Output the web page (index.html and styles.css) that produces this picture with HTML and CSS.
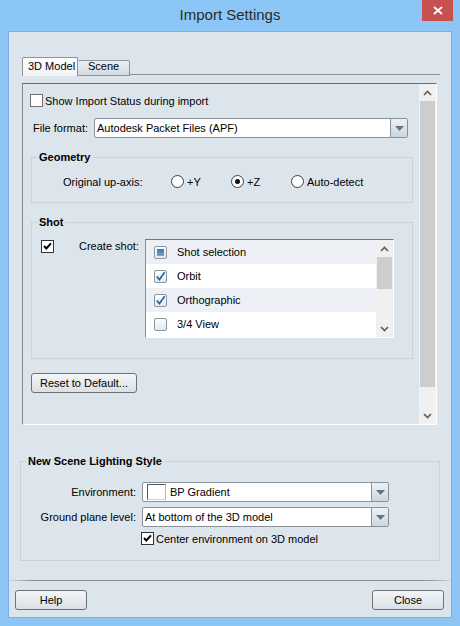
FILE: index.html
```html
<!DOCTYPE html>
<html>
<head>
<meta charset="utf-8">
<title>Import Settings</title>
<link rel="stylesheet" href="styles.css">
</head>
<body>
<div class="window">
  <div class="titlebar">
    <div class="title">Import Settings</div>
    <div class="close-btn"><svg width="10" height="9" viewBox="0 0 10 9"><path d="M1 1 L9 8 M9 1 L1 8" stroke="#fff" stroke-width="1.8" fill="none"/></svg></div>
  </div>
  <div class="client">
    <div class="tabs">
      <div class="tab active">3D Model</div>
      <div class="tab scene">Scene</div>
      <div class="tabline"></div>
    </div>
    <div class="panel">
      <div class="panel-body">
        <div class="check-row show-status"><span class="cb"></span><span>Show Import Status during import</span></div>
        <div class="field-row file-format">
          <span class="ff-label">File format:</span>
          <div class="combo ff-combo">
            <span class="combo-text">Autodesk Packet Files (APF)</span>
            <span class="combo-btn"><svg width="9" height="5" viewBox="0 0 9 5"><polygon points="0,0 9,0 4.5,5" fill="#667482"/></svg></span>
          </div>
        </div>
        <div class="group geometry">
          <div class="group-title">Geometry</div>
          <div class="radio-row">
            <span class="axis-label">Original up-axis:</span>
            <span class="opt"><span class="radio"></span><span>+Y</span></span>
            <span class="opt"><span class="radio on"></span><span>+Z</span></span>
            <span class="opt last"><span class="radio"></span><span>Auto-detect</span></span>
          </div>
        </div>
        <div class="group shot">
          <div class="group-title">Shot</div>
          <div class="shot-row">
            <span class="cb checked shot-cb"><svg width="11" height="11" viewBox="0 0 11 11"><path d="M2 5 L4.3 7.5 L9 2.3" stroke="#000" stroke-width="2" fill="none"/></svg></span>
            <span class="shot-label">Create shot:</span>
            <div class="listbox">
              <div class="list-rows">
                <div class="list-row alt"><span class="lcb"><span class="mixed-fill"></span></span><span>Shot selection</span></div>
                <div class="list-row"><span class="lcb"><svg width="11" height="11" viewBox="0 0 11 11"><path d="M1.8 5.6 L4.4 8.6 L9.6 1.2" stroke="#1f5f94" stroke-width="1.6" fill="none"/></svg></span><span>Orbit</span></div>
                <div class="list-row alt"><span class="lcb"><svg width="11" height="11" viewBox="0 0 11 11"><path d="M1.8 5.6 L4.4 8.6 L9.6 1.2" stroke="#1f5f94" stroke-width="1.6" fill="none"/></svg></span><span>Orthographic</span></div>
                <div class="list-row"><span class="lcb"></span><span>3/4 View</span></div>
              </div>
              <div class="vscroll small">
                <div class="arrow"><svg width="9" height="6" viewBox="0 0 9 6"><path d="M1 5 L4.5 1.5 L8 5" stroke="#5f5f5f" stroke-width="1.7" fill="none"/></svg></div>
                <div class="thumb small-thumb"></div>
                <div class="spacer"></div>
                <div class="arrow"><svg width="9" height="6" viewBox="0 0 9 6"><path d="M1 1 L4.5 4.5 L8 1" stroke="#5f5f5f" stroke-width="1.7" fill="none"/></svg></div>
              </div>
            </div>
          </div>
        </div>
        <button class="btn reset">Reset to Default...</button>
      </div>
      <div class="vscroll big">
        <div class="arrow"><svg width="9" height="6" viewBox="0 0 9 6"><path d="M1 5 L4.5 1.5 L8 5" stroke="#5f5f5f" stroke-width="1.7" fill="none"/></svg></div>
        <div class="thumb big-thumb"></div>
        <div class="spacer"></div>
        <div class="arrow"><svg width="9" height="6" viewBox="0 0 9 6"><path d="M1 1 L4.5 4.5 L8 1" stroke="#5f5f5f" stroke-width="1.7" fill="none"/></svg></div>
      </div>
    </div>
    <div class="group lighting">
      <div class="group-title">New Scene Lighting Style</div>
      <div class="form-row first">
        <span class="flabel">Environment:</span>
        <div class="combo wide">
          <span class="swatch"></span>
          <span class="combo-text env-text">BP Gradient</span>
          <span class="combo-btn"><svg width="9" height="5" viewBox="0 0 9 5"><polygon points="0,0 9,0 4.5,5" fill="#667482"/></svg></span>
        </div>
      </div>
      <div class="form-row">
        <span class="flabel">Ground plane level:</span>
        <div class="combo wide">
          <span class="combo-text">At bottom of the 3D model</span>
          <span class="combo-btn"><svg width="9" height="5" viewBox="0 0 9 5"><polygon points="0,0 9,0 4.5,5" fill="#667482"/></svg></span>
        </div>
      </div>
      <div class="check-row center-env"><span class="cb checked"><svg width="11" height="11" viewBox="0 0 11 11"><path d="M2 5 L4.3 7.5 L9 2.3" stroke="#000" stroke-width="2" fill="none"/></svg></span><span>Center environment on 3D model</span></div>
    </div>
    <div class="separator"></div>
    <div class="footer">
      <button class="btn foot">Help</button>
      <button class="btn foot">Close</button>
    </div>
  </div>
</div>
</body>
</html>
```
FILE: styles.css
```css
* { box-sizing: border-box; }
html, body { margin: 0; padding: 0; }
body {
  width: 460px;
  height: 626px;
  overflow: hidden;
  background: #8bc6f6;
  font-family: "Liberation Sans", Arial, sans-serif;
  font-size: 11px;
  color: #000;
  white-space: nowrap;
}
.window { width: 460px; height: 626px; }

.titlebar {
  height: 31px;
  display: grid;
  grid-template-columns: 1fr auto 1fr;
}
.title {
  grid-column: 2;
  font-size: 15px;
  line-height: 29px;
  color: #2b2b2b;
}
.close-btn {
  grid-column: 3;
  justify-self: end;
  width: 31px;
  height: 21px;
  margin-right: 7px;
  background: #c75050;
  display: flex;
  align-items: center;
  justify-content: center;
}

.client {
  margin: 0 8px;
  width: 444px;
  height: 587px;
  background: #dde5ec;
  border: 1px solid #79b0e0;
  padding-top: 25px;
}

/* tabs */
.tabs {
  display: flex;
  align-items: flex-end;
  margin-left: 13px;
  width: 418px;
  height: 19px;
}
.tab {
  border: 1px solid #8d939a;
  border-radius: 2px 2px 0 0;
}
.tab.active {
  width: 56px;
  height: 19px;
  border-bottom: none;
  background: linear-gradient(#fdfdfd, #f1f4f6);
  padding-left: 5px;
  line-height: 17px;
  position: relative;
  z-index: 1;
}
.tab.scene {
  width: 52px;
  height: 16px;
  border-left: none;
  background: linear-gradient(#edf0f3, #d3dae1);
  padding-left: 10px;
  line-height: 11px;
}
.tabline {
  flex: 1;
  height: 1px;
  margin-bottom: 1px;
  background: #8d939a;
}

/* panel */
.panel {
  margin: 7px 0 0 13px;
  width: 415px;
  height: 342px;
  border: 1px solid;
  border-color: #6b6f74 #ffffff #ffffff #868b90;
  display: flex;
}
.panel-body { flex: 1; }

.check-row {
  display: flex;
  align-items: center;
  gap: 2px;
  height: 13px;
}
.show-status { margin: 10px 0 0 7px; }
.cb {
  width: 13px;
  height: 13px;
  border: 1px solid #707070;
  background: #fff;
  display: flex;
  align-items: center;
  justify-content: center;
  flex: none;
}
.cb.checked { border-color: #333; }

.field-row {
  display: flex;
  align-items: center;
  height: 20px;
}
.file-format { margin: 11px 0 0 10px; }
.ff-label { width: 61px; }
.combo {
  display: flex;
  height: 20px;
  border: 1px solid #8a9198;
  border-radius: 2px;
  background: #fff;
}
.ff-combo { width: 314px; }
.combo-text {
  flex: 1;
  padding-left: 2px;
  line-height: 18px;
}
.combo-btn {
  width: 17px;
  border-left: 1px solid #8a9198;
  border-radius: 0 1px 1px 0;
  background: linear-gradient(#eef2f5, #cdd6de);
  display: flex;
  align-items: center;
  justify-content: center;
}

/* groups */
.group {
  border: 1px solid #cbd3da;
}
.group-title {
  display: table;
  margin: -7px 0 0 5px;
  padding: 0 2px;
  line-height: 13px;
  font-weight: bold;
  background: #dde5ec;
}
.geometry {
  margin: 19px 0 0 8px;
  width: 382px;
  padding-bottom: 14px;
}
.radio-row {
  display: flex;
  align-items: center;
  height: 13px;
  margin: 11px 0 0 31px;
}
.axis-label { width: 108px; }
.opt {
  width: 60px;
  display: flex;
  align-items: center;
  gap: 3px;
  flex: none;
}
.opt.last { width: auto; }
.radio {
  width: 13px;
  height: 13px;
  border: 1px solid #3f3f3f;
  border-radius: 50%;
  background: #fff;
  display: flex;
  align-items: center;
  justify-content: center;
  flex: none;
}
.radio.on::after {
  content: "";
  width: 5px;
  height: 5px;
  border-radius: 50%;
  background: #111;
}

.shot {
  margin: 19px 0 0 8px;
  width: 382px;
  padding-bottom: 20px;
}
.shot-row {
  display: flex;
  align-items: flex-start;
  margin-top: 10px;
}
.shot-cb { margin: 1px 0 0 9px; }
.shot-label {
  width: 66px;
  margin: 1px 0 0 25px;
  line-height: 13px;
}
.listbox {
  width: 249px;
  height: 99px;
  border: 1px solid;
  border-color: #767676 #ffffff #ffffff #8e8e8e;
  background: #fff;
  display: flex;
}
.list-rows { width: 230px; }
.list-row {
  height: 24px;
  display: flex;
  align-items: center;
}
.list-row.alt { background: #edf1f5; }
.lcb {
  width: 13px;
  height: 13px;
  margin: 0 10px 0 8px;
  border: 1px solid #8797a5;
  border-radius: 2px;
  background: linear-gradient(#fbfcfd, #e3e9ee);
  display: flex;
  align-items: center;
  justify-content: center;
}
.mixed-fill {
  width: 7px;
  height: 7px;
  background: linear-gradient(#3a74a8, #78a3cb);
}

/* scrollbars */
.vscroll {
  width: 17px;
  background: #f0f0f0;
  display: flex;
  flex-direction: column;
}
.arrow {
  height: 17px;
  display: flex;
  align-items: center;
  justify-content: center;
  flex: none;
}
.thumb {
  margin: 0 1px;
  background: #cdcdcd;
  flex: none;
}
.big-thumb { height: 286px; }
.small-thumb { height: 32px; }
.spacer { flex: 1; }

/* buttons */
.btn {
  font-family: "Liberation Sans", Arial, sans-serif;
  font-size: 11px;
  color: #000;
  height: 20px;
  padding: 0;
  border: 1px solid #707070;
  border-radius: 3px;
  background: linear-gradient(#f4f6f8, #d9e0e6);
  display: block;
}
.reset {
  width: 106px;
  margin: 14px 0 0 8px;
}

/* lighting */
.lighting {
  margin: 36px 0 0 11px;
  width: 420px;
  padding-bottom: 15px;
}
.form-row {
  display: flex;
  align-items: center;
  height: 20px;
  margin-top: 5px;
}
.form-row.first { margin-top: 14px; }
.flabel {
  width: 115px;
  margin-right: 6px;
  text-align: right;
}
.combo.wide { width: 247px; }
.swatch {
  width: 19px;
  height: 16px;
  margin: 1px 0 0 4px;
  border: 1px solid;
  border-color: #5a5a5a #b5b5b5 #d0d0d0 #5a5a5a;
  background: #fff;
}
.env-text { padding-left: 4px; }
.center-env { margin: 5px 0 0 120px; }

.separator {
  margin-top: 19px;
  height: 1px;
  background: linear-gradient(to right, rgba(140,147,154,0.15), #8c939a 5%, #8c939a 95%, rgba(140,147,154,0.15));
}
.footer {
  display: flex;
  justify-content: space-between;
  margin-top: 9px;
  padding: 0 7px 0 6px;
}
.foot { width: 72px; }
```
